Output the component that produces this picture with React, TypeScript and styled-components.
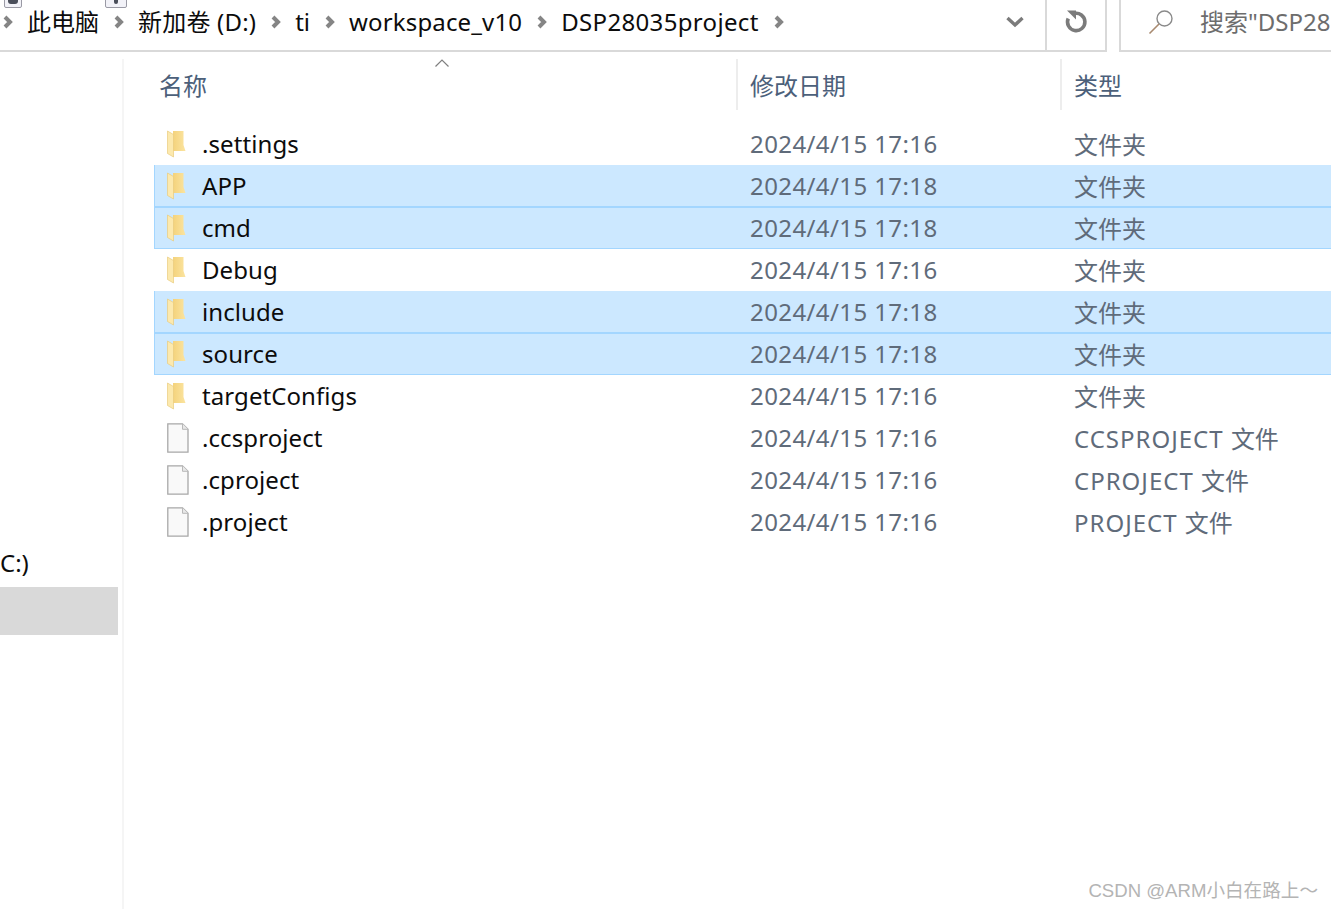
import React from "react";
import styled, { createGlobalStyle } from "styled-components";

const Global = createGlobalStyle`
  html, body { margin: 0; padding: 0; background: #fff; overflow: hidden; }
  body { font-family: "Noto Sans", "Noto Sans CJK SC", sans-serif; }
`;

const Page = styled.div`
  position: relative;
  width: 1331px;
  height: 909px;
  overflow: hidden;
  background: #fff;
  display: flex;
  flex-direction: column;
`;

const TopBar = styled.div`
  position: relative;
  height: 52px;
  flex: none;
  display: flex;
  align-items: stretch;
  box-sizing: border-box;
`;

const AddressBox = styled.div`
  width: 1107px;
  flex: none;
  box-sizing: border-box;
  border-bottom: 2px solid #d9d9d9;
  border-right: 2px solid #d9d9d9;
  display: flex;
  align-items: stretch;
`;

const Crumbs = styled.div`
  flex: 1;
  display: flex;
  align-items: center;
  padding: 0 0 6px 2px;
`;

const Crumb = styled.span<{ $ls: number }>`
  font-size: 24px;
  line-height: 44px;
  color: #0c0c0c;
  white-space: nowrap;
  margin-right: 14px;
  letter-spacing: ${(p) => p.$ls}px;
`;

const Chevron = styled.svg`
  width: 12px;
  height: 14px;
  flex: none;
  margin-right: 13px;
`;

const DropButton = styled.div`
  width: 60px;
  flex: none;
  display: flex;
  align-items: center;
  justify-content: center;
  padding-bottom: 6px;
`;

const RefreshButton = styled.div`
  width: 60px;
  flex: none;
  box-sizing: border-box;
  border-left: 2px solid #d9d9d9;
  display: flex;
  align-items: center;
  justify-content: center;
  padding-bottom: 6px;
`;

const SearchBox = styled.div`
  margin-left: 12px;
  flex: 1;
  min-width: 0;
  box-sizing: border-box;
  border-left: 2px solid #d9d9d9;
  border-bottom: 2px solid #d9d9d9;
  display: flex;
  align-items: center;
  padding: 0 0 6px 26px;
  overflow: hidden;
`;

const SearchGlyph = styled.svg`
  width: 26px;
  height: 26px;
  flex: none;
`;

const SearchText = styled.span`
  margin-left: 27px;
  font-size: 24px;
  line-height: 44px;
  color: #6d6d6d;
  white-space: nowrap;
`;

const ClippedTab = styled.div<{ $left: number; $width: number }>`
  position: absolute;
  top: -12px;
  left: ${(p) => p.$left}px;
  width: ${(p) => p.$width}px;
  height: 20px;
  box-sizing: border-box;
  border: 1px solid #9a9aa5;
  border-radius: 2px;
  background: #f2f2f8;
  display: flex;
  justify-content: center;
`;

const ClippedMark = styled.span<{ $w: number }>`
  display: block;
  width: ${(p) => p.$w}px;
  height: 15px;
  border-radius: 0 0 3px 3px;
  background: #4a4e5a;
`;

const Body = styled.div`
  flex: 1;
  display: flex;
  min-height: 0;
  padding-top: 7px;
`;

const Sidebar = styled.div`
  width: 124px;
  flex: none;
  box-sizing: border-box;
  border-right: 2px solid #f5f5f5;
  display: flex;
  flex-direction: column;
  padding-top: 484px;
`;

const SideLabel = styled.div`
  height: 40px;
  font-size: 24px;
  line-height: 40px;
  color: #0c0c0c;
  overflow: hidden;
`;

const SideSelected = styled.div`
  margin-top: 4px;
  width: 118px;
  height: 48px;
  background: #d9d9d9;
`;

const Main = styled.div`
  flex: 1;
  position: relative;
  min-width: 0;
  padding-left: 30px;
`;

const HeaderRow = styled.div`
  display: flex;
  height: 51px;
  margin-bottom: 13px;
`;

const HeadCell = styled.div<{ $w: number; $pad: number; $line?: boolean }>`
  width: ${(p) => p.$w}px;
  flex: none;
  box-sizing: border-box;
  padding-left: ${(p) => p.$pad}px;
  font-size: 24px;
  line-height: 54px;
  color: #4c607a;
  border-right: ${(p) => (p.$line ? "2px solid #ededed" : "none")};
`;

const SortCaret = styled.svg`
  position: absolute;
  left: 310px;
  top: -1px;
  width: 16px;
  height: 10px;
`;

const Row = styled.div<{ $sel?: boolean; $joined?: boolean }>`
  height: 42px;
  box-sizing: border-box;
  display: flex;
  align-items: center;
  background: ${(p) => (p.$sel ? "#cce8ff" : "#fff")};
  border-bottom: 1px solid ${(p) => (p.$sel ? "#a3d6ff" : "#fff")};
  border-left: 1px solid ${(p) => (p.$sel ? "#a3d6ff" : "#fff")};
  box-shadow: ${(p) => (p.$joined ? "inset 0 1px 0 #a3d6ff" : "none")};
`;

const NameCell = styled.div`
  width: 583px;
  flex: none;
  box-sizing: border-box;
  display: flex;
  align-items: center;
  padding-left: 12px;
  gap: 11px;
  font-size: 24px;
  letter-spacing: 0.08px;
  color: #0c0c0c;
  white-space: nowrap;
`;

const DateCell = styled.div`
  width: 324px;
  flex: none;
  font-size: 24px;
  letter-spacing: 0.4px;
  color: #5f6b7a;
  padding-left: 12px;
  box-sizing: border-box;
  white-space: nowrap;
`;

const TypeCell = styled.div`
  flex: 1;
  font-size: 24px;
  color: #5f6b7a;
  white-space: nowrap;
  padding-left: 12px;
`;

const TypeCode = styled.span`
  letter-spacing: 1px;
`;

const Icon = styled.svg`
  width: 24px;
  height: 30px;
  flex: none;
`;

const Watermark = styled.div`
  position: absolute;
  right: 13px;
  bottom: 7px;
  font-family: "Liberation Sans", "Noto Sans CJK SC", sans-serif;
  font-size: 18.6px;
  color: #b4b4b4;
  white-space: nowrap;
`;

const ChevronIcon = () => (
  <Chevron viewBox="0 0 12 14">
    <path d="M3 2l5 5-5 5" fill="none" stroke="#858585" strokeWidth="4" />
  </Chevron>
);

const FolderIcon = () => (
  <Icon viewBox="0 0 24 30">
    <defs>
      <linearGradient id="folderBody" x1="0" y1="0" x2="1" y2="0">
        <stop offset="0" stopColor="#f1cb6c" />
        <stop offset="1" stopColor="#fbe4a0" />
      </linearGradient>
    </defs>
    <path d="M0.5 2H16.5V16L18.5 22H6V2Z" fill="url(#folderBody)" />
    <path d="M0.5 2L6.5 5.5V28L0.5 24.5Z" fill="#fce9ae" stroke="#e9cb7d" strokeWidth="0.7" />
  </Icon>
);

const FileIcon = () => (
  <Icon viewBox="0 0 24 30">
    <path d="M0.8 0.8H15.5L21 6.3V29.2H0.8Z" fill="#f9f9f9" stroke="#a8a8a8" strokeWidth="1.3" />
    <path d="M15.5 0.8V6.3H21" fill="#e8e8e8" stroke="#b8b8b8" strokeWidth="1" />
  </Icon>
);

type Item = {
  name: string;
  date: string;
  type: string;
  code?: string;
  kind: "folder" | "file";
  sel?: boolean;
};

const items: Item[] = [
  { name: ".settings", date: "2024/4/15 17:16", type: "文件夹", kind: "folder" },
  { name: "APP", date: "2024/4/15 17:18", type: "文件夹", kind: "folder", sel: true },
  { name: "cmd", date: "2024/4/15 17:18", type: "文件夹", kind: "folder", sel: true },
  { name: "Debug", date: "2024/4/15 17:16", type: "文件夹", kind: "folder" },
  { name: "include", date: "2024/4/15 17:18", type: "文件夹", kind: "folder", sel: true },
  { name: "source", date: "2024/4/15 17:18", type: "文件夹", kind: "folder", sel: true },
  { name: "targetConfigs", date: "2024/4/15 17:16", type: "文件夹", kind: "folder" },
  { name: ".ccsproject", date: "2024/4/15 17:16", code: "CCSPROJECT ", type: "文件", kind: "file" },
  { name: ".cproject", date: "2024/4/15 17:16", code: "CPROJECT ", type: "文件", kind: "file" },
  { name: ".project", date: "2024/4/15 17:16", code: "PROJECT ", type: "文件", kind: "file" },
];

const crumbs: { label: string; ls: number }[] = [
  { label: "此电脑", ls: 0 },
  { label: "新加卷 (D:)", ls: 0.2 },
  { label: "ti", ls: 0 },
  { label: "workspace_v10", ls: 0.15 },
  { label: "DSP28035project", ls: 0.33 },
];

export default function App() {
  return (
    <Page>
      <Global />
      <TopBar>
        <ClippedTab $left={4} $width={18}><ClippedMark $w={10} /></ClippedTab>
        <ClippedTab $left={105} $width={22}><ClippedMark $w={4} /></ClippedTab>
        <AddressBox>
          <Crumbs>
            {crumbs.map((c) => (
              <React.Fragment key={c.label}>
                <ChevronIcon />
                <Crumb $ls={c.ls}>{c.label}</Crumb>
              </React.Fragment>
            ))}
            <ChevronIcon />
          </Crumbs>
          <DropButton>
            <svg width="20" height="14" viewBox="0 0 20 14">
              <path d="M2.5 3l7.5 7 7.5-7" fill="none" stroke="#7b7b7b" strokeWidth="3.4" />
            </svg>
          </DropButton>
          <RefreshButton>
            <svg width="24" height="26" viewBox="0 0 24 26">
              <path d="M10 4.5A8.7 8.7 0 1 1 4.2 9.5" fill="none" stroke="#7b7b7b" strokeWidth="3.6" />
              <path d="M3 1.5h9v9z" fill="#7b7b7b" />
            </svg>
          </RefreshButton>
        </AddressBox>
        <SearchBox>
          <SearchGlyph viewBox="0 0 26 26">
            <circle cx="17.5" cy="9.5" r="7.5" fill="none" stroke="#8a8a8a" strokeWidth="1.4" />
            <path d="M12 15L2.5 24.5" stroke="#a88a70" strokeWidth="1.6" />
          </SearchGlyph>
          <SearchText>搜索"DSP28035project"</SearchText>
        </SearchBox>
      </TopBar>
      <Body>
        <Sidebar>
          <SideLabel>C:)</SideLabel>
          <SideSelected />
        </Sidebar>
        <Main>
          <SortCaret viewBox="0 0 16 10">
            <path d="M1.5 8.5L8 2l6.5 6.5" fill="none" stroke="#7f7f7f" strokeWidth="1.2" />
          </SortCaret>
          <HeaderRow>
            <HeadCell $w={584} $pad={5} $line>名称</HeadCell>
            <HeadCell $w={324} $pad={12} $line>修改日期</HeadCell>
            <HeadCell $w={200} $pad={12}>类型</HeadCell>
          </HeaderRow>
          {items.map((it, i) => (
            <Row key={it.name} $sel={it.sel} $joined={it.sel && !!items[i - 1]?.sel}>
              <NameCell>
                {it.kind === "folder" ? <FolderIcon /> : <FileIcon />}
                {it.name}
              </NameCell>
              <DateCell>{it.date}</DateCell>
              <TypeCell>
                {it.code && <TypeCode>{it.code}</TypeCode>}
                {it.type}
              </TypeCell>
            </Row>
          ))}
        </Main>
      </Body>
      <Watermark>CSDN @ARM小白在路上～</Watermark>
    </Page>
  );
}
